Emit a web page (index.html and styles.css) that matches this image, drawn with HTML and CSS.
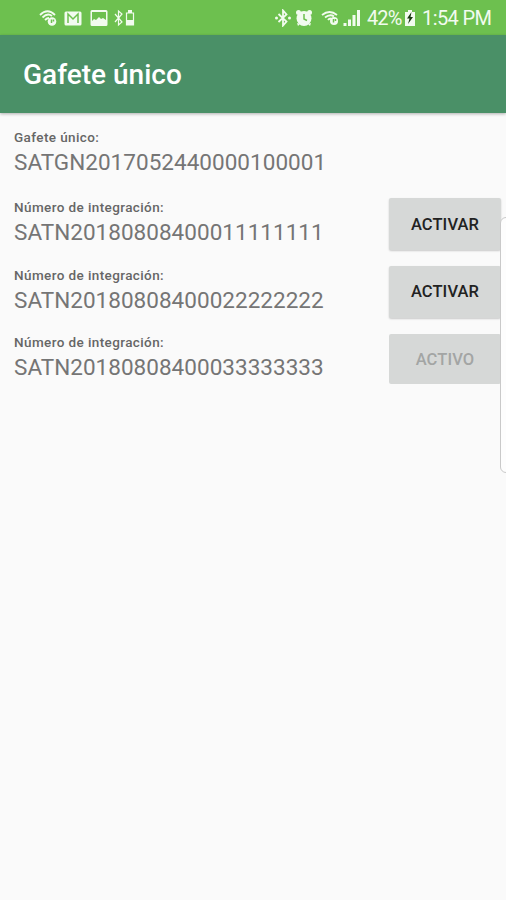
FILE: index.html
```html
<!DOCTYPE html>
<html lang="es">
<head>
<meta charset="utf-8">
<title>Gafete único</title>
<link rel="stylesheet" href="styles.css">
</head>
<body>
<header class="status">
  <svg class="icon wifi" viewBox="0 0 18 18"><g class="line"><path d="M1 6Q8.500-1.500 16 6M3.500 8.500Q8.500 3.500 13 7M6 11Q8 9 10 9"/></g><circle cx="13" cy="12.500" r="4.300"/><path class="cut" d="M12.500 10.500v3.500M14.500 10.500v2"/></svg>
  <svg class="icon mail" viewBox="0 0 18 18"><rect x=".5" y="2.500" width="17" height="14" rx="1.500"/><path class="cut" d="M4 14V5l5 5 5-5v9"/></svg>
  <svg class="icon photo" viewBox="0 0 18 18"><path fill-rule="evenodd" d="M2 1h14q1.500 0 1.500 1.500v13q0 1.500-1.500 1.500H2Q.5 17 .5 15.500v-13Q.5 1 2 1zm0 2v9l2-2 2 1 3-3 2 2 2-1 3 2V3z"/></svg>
  <svg class="icon btbat" viewBox="0 0 21 18"><g class="thin"><path d="M1 5l7 8-3.500 3V2L8 5l-7 8"/><path d="M12.500 4h7v12h-7z"/></g><path d="M14 1h4v3h-4zM12.500 11h7v5h-7z"/></svg>
  <svg class="icon bt" viewBox="0 0 18 18"><path class="line" d="M4.500 5l8 7.500L9 16.500v-15l3.500 4L4.500 13"/><circle cx="2.500" cy="9" r="1.500"/><circle cx="15.500" cy="9" r="1.500"/></svg>
  <svg class="icon alarm" viewBox="0 0 18 18"><circle cx="9" cy="9.500" r="7.500"/><circle cx="3.500" cy="3.500" r="2.500"/><circle cx="14.500" cy="3.500" r="2.500"/><path d="M2 14l3 1-2 2zM16 14l-3 1 2 2z"/><path class="cut" d="M9 5v5l3 1.500"/></svg>
  <svg class="icon wifi2" viewBox="0 0 18 18"><g class="line"><path d="M1 6Q8.500 0 16 6M4 8.500Q9 4.500 13 7.500M7 11Q8 9.500 10 9.500"/></g><circle cx="13" cy="12" r="4"/><path class="cut" d="M12.500 10v3.500M14.500 10v2"/></svg>
  <svg class="icon signal" viewBox="0 0 18 18"><path d="M.5 14h3v3h-3zM5 10.500h3V17H5zM9.500 6h3v11h-3zM14 1h3v16h-3z"/></svg>
  <span class="percent">42%</span>
  <svg class="icon battery" viewBox="0 0 12 18"><path d="M4 1h4v2h3v14H1V3h3z"/><path class="bolt" d="M7.500 3L3 9.500h2.500L4 15l5-7H6.500z"/></svg>
  <span class="time">1:54 PM</span>
</header>
<div class="appbar"><h1>Gafete único</h1></div>
<main>
  <section class="item first"><div><div class="label">Gafete único:</div><div class="value">SATGN2017052440000100001</div></div></section>
  <section class="item"><div><div class="label">Número de integración:</div><div class="value">SATN20180808400011111111</div></div><button>ACTIVAR</button></section>
  <section class="item"><div><div class="label">Número de integración:</div><div class="value">SATN20180808400022222222</div></div><button>ACTIVAR</button></section>
  <section class="item"><div><div class="label">Número de integración:</div><div class="value">SATN20180808400033333333</div></div><button disabled>ACTIVO</button></section>
</main>
<div class="edge"></div>
</body>
</html>
```
FILE: styles.css
```css
* { box-sizing: border-box; }
body { margin: 0; height: 900px; overflow: hidden; position: relative; background: #fafafa; font-family: Roboto, sans-serif; }
.status { height: 35px; background: #6dc04f; color: #f2fbef; display: flex; align-items: center; padding-left: 39px; white-space: nowrap; }
.icon { flex: none; width: 18px; height: 18px; fill: #f2fbef; }
.line, .thin { fill: none; stroke: #f2fbef; stroke-width: 1.8; }
.thin { stroke-width: 1.2; }
.cut { fill: none; stroke: #6dc04f; stroke-width: 1.5; }
.bolt { fill: #173810; }
.mail { margin-left: 7px; }
.photo { margin-left: 8px; }
.btbat { width: 21px; margin-left: 6px; }
.bt { margin-left: 139px; }
.alarm { margin-left: 3px; }
.wifi2 { margin-left: 8px; }
.signal { margin-left: 4px; }
.percent, .time { font-size: 20px; line-height: 24px; }
.percent { width: 35px; margin-left: 6px; letter-spacing: -.9px; }
.battery { width: 12px; margin-left: 2px; }
.time { margin-left: 6px; letter-spacing: -.6px; }
.appbar { height: 78px; background: #4a9067; display: flex; align-items: center; padding-left: 23px; box-shadow: 0 1px 3px rgba(0,0,0,.3); }
h1 { margin: 2px 0 0; font-size: 28px; font-weight: 500; line-height: 32px; color: #fff; }
main { padding: 16px 5px 0 14px; }
.item { height: 67.500px; display: flex; justify-content: space-between; align-items: flex-start; }
.first { height: 70px; }
.label { font-size: 13.500px; line-height: 16px; font-weight: 500; color: #666; letter-spacing: .4px; }
.value { font-size: 22.500px; line-height: 28px; margin-top: 3px; color: #757575; letter-spacing: .03px; }
button { width: 112px; height: 52px; margin: -1px 0 0; padding: 0; border: 0; border-radius: 2px; background: #d6d8d7; color: #222; font: 500 16.500px Roboto, sans-serif; letter-spacing: .1px; box-shadow: 0 1px 2px rgba(0,0,0,.2); }
button:disabled { height: 50px; margin-top: 0; color: #a3a5a4; box-shadow: none; }
.edge { position: absolute; left: 500px; top: 217px; width: 12px; height: 256px; border: 1px solid #c9c9c9; border-radius: 6px; background: #fdfdfd; }
```
